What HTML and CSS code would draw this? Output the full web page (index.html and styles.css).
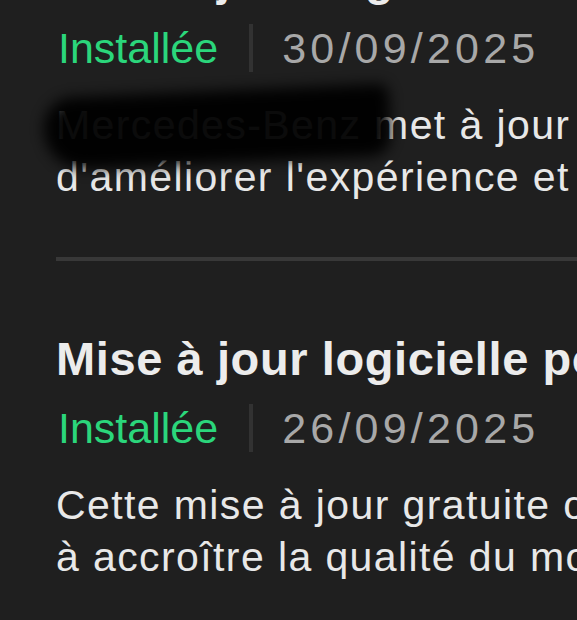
FILE: index.html
```html
<!DOCTYPE html>
<html lang="fr">
<head>
  <meta charset="UTF-8" />
  <meta name="viewport" content="width=device-width, initial-scale=1.0"/>
  <title>Mises à jour</title>
  <link rel="stylesheet" href="styles.css">
</head>
<body>

  <div class="list">
    <div class="update">
      <h2 class="title">Mise à jour logicielle à distance</h2>
      <div class="meta">
        <span class="status">Installée</span>
        <span class="sep"></span>
        <span class="date">30/09/2025</span>
      </div>
      <div class="desc">
        <span class="line">Mercedes-Benz met à jour le logiciel de votre véhicule afin</span>
        <span class="line">d'améliorer l'expérience et les fonctions disponibles.</span>
        <div class="smudge"></div>
      </div>
    </div>

    <div class="update">
      <h2 class="title">Mise à jour logicielle pour votre véhicule</h2>
      <div class="meta">
        <span class="status">Installée</span>
        <span class="sep"></span>
        <span class="date">26/09/2025</span>
      </div>
      <div class="desc">
        <span class="line">Cette mise à jour gratuite contribue notamment</span>
        <span class="line">à accroître la qualité du module de communication.</span>
      </div>
    </div>
  </div>

</body>
</html>
```

FILE: styles.css
```css
* {
  margin: 0; padding: 0; box-sizing: border-box;
  font-family: 'Liberation Sans', Arial, sans-serif;
}
html, body {
  overflow: hidden;
}
body {
  background: #1f1f1f;
  color: #e8e8e8;
  min-height: 100vh;
}
.list {
  margin-top: -119px;
}
.update {
  margin-left: 56px;
  padding: 70px 0 54px;
  border-bottom: 4px solid #383838;
  white-space: nowrap;
}
.title {
  font-size: 47px;
  line-height: 56px;
  font-weight: 700;
  letter-spacing: 0.6px;
  color: #ececec;
}
.meta {
  display: flex;
  align-items: center;
  height: 48px;
  margin-top: 17px;
  font-size: 43px;
  line-height: 48px;
}
.status {
  color: #2bd67b;
  margin-left: 2px;
}
.sep {
  width: 4px;
  height: 48px;
  margin: 0 29px 0 31px;
  background: #323232;
}
.date {
  color: #a8a8a8;
  letter-spacing: 4.2px;
}
.desc {
  position: relative;
  margin-top: 27px;
  font-size: 41px;
  line-height: 52px;
  letter-spacing: 1.4px;
}
.line {
  display: block;
}
.smudge {
  position: absolute;
  left: -12px;
  top: -8px;
  width: 346px;
  height: 72px;
  background: #000;
  border-radius: 30px 10px 20px 40px;
  filter: blur(7px);
  opacity: 0.95;
  transform: rotate(-2.5deg);
}
```
